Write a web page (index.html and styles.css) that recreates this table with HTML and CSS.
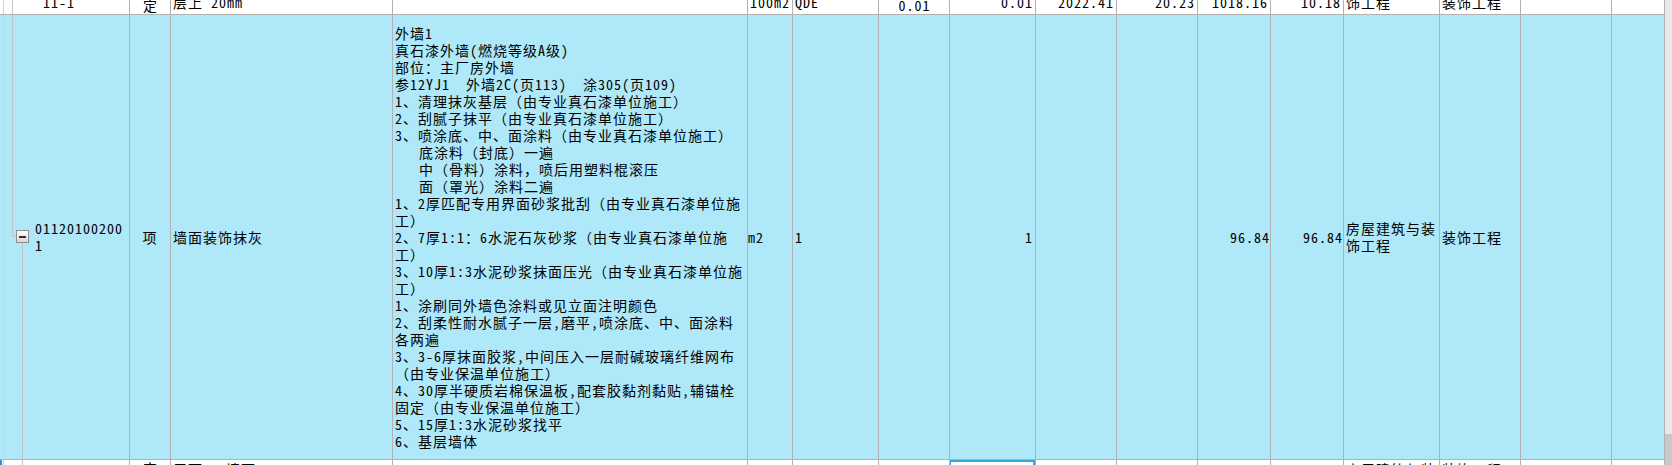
FILE: index.html
```html
<!DOCTYPE html>
<html lang="zh-CN">
<head>
<meta charset="utf-8">
<title>清单</title>
<link rel="stylesheet" href="styles.css">
</head>
<body>
<div class="page">
  <div class="grid">
    <div class="row row-top">
      <div class="cell gutter"></div>
      <div class="cell c-code"><span class="tree-line parent"></span><span class="top-code">11-1</span></div>
      <div class="cell center">定</div>
      <div class="cell">层上 20mm</div>
      <div class="cell"></div>
      <div class="cell">100m2</div>
      <div class="cell">QDE</div>
      <div class="cell center">0.01</div>
      <div class="cell right">0.01</div>
      <div class="cell right">2022.41</div>
      <div class="cell right">20.23</div>
      <div class="cell right">1018.16</div>
      <div class="cell right">10.18</div>
      <div class="cell">饰工程</div>
      <div class="cell">装饰工程</div>
      <div class="cell"></div>
      <div class="cell"></div>
    </div>

    <div class="row row-main">
      <div class="cell gutter"></div>
      <div class="cell c-code">
        <span class="tree-line parent-end"></span>
        <span class="tree-elbow"></span>
        <span class="tree-box"><span class="minus"></span></span>
        <span class="tree-line child"></span>
        <span class="code-text">01120100200<br>1</span>
      </div>
      <div class="cell center">项</div>
      <div class="cell">墙面装饰抹灰</div>
      <div class="cell desc">外墙1<br>真石漆外墙(燃烧等级A级)<br>部位：主厂房外墙<br>参12YJ1&nbsp;&nbsp;外墙2C(页113)&nbsp;&nbsp;涂305(页109)<br>1、清理抹灰基层（由专业真石漆单位施工）<br>2、刮腻子抹平（由专业真石漆单位施工）<br>3、喷涂底、中、面涂料（由专业真石漆单位施工）<br>&nbsp;&nbsp;&nbsp;底涂料（封底）一遍<br>&nbsp;&nbsp;&nbsp;中（骨料）涂料，喷后用塑料棍滚压<br>&nbsp;&nbsp;&nbsp;面（罩光）涂料二遍<br>1、2厚匹配专用界面砂浆批刮（由专业真石漆单位施<br>工）<br>2、7厚1:1：6水泥石灰砂浆（由专业真石漆单位施<br>工）<br>3、10厚1:3水泥砂浆抹面压光（由专业真石漆单位施<br>工）<br>1、涂刷同外墙色涂料或见立面注明颜色<br>2、刮柔性耐水腻子一层,磨平,喷涂底、中、面涂料<br>各两遍<br>3、3-6厚抹面胶浆,中间压入一层耐碱玻璃纤维网布<br>（由专业保温单位施工）<br>4、30厚半硬质岩棉保温板,配套胶黏剂黏贴,辅锚栓<br>固定（由专业保温单位施工）<br>5、15厚1:3水泥砂浆找平<br>6、基层墙体</div>
      <div class="cell tight">m2</div>
      <div class="cell">1</div>
      <div class="cell"></div>
      <div class="cell right">1</div>
      <div class="cell"></div>
      <div class="cell"></div>
      <div class="cell right flush">96.84</div>
      <div class="cell right flush">96.84</div>
      <div class="cell">房屋建筑与装饰工程</div>
      <div class="cell">装饰工程</div>
      <div class="cell"></div>
      <div class="cell"></div>
    </div>

    <div class="row row-bottom">
      <div class="cell gutter marked"></div>
      <div class="cell c-code"><span class="tree-line child-cont"></span></div>
      <div class="cell center">定</div>
      <div class="cell">屋面1：墙面</div>
      <div class="cell"></div>
      <div class="cell"></div>
      <div class="cell"></div>
      <div class="cell"></div>
      <div class="cell selected"></div>
      <div class="cell"></div>
      <div class="cell"></div>
      <div class="cell"></div>
      <div class="cell"></div>
      <div class="cell wrap">房屋建筑与装饰工程</div>
      <div class="cell">装饰工程</div>
      <div class="cell"></div>
      <div class="cell"></div>
    </div>
  </div>
  <div class="scrollbar"><div class="thumb"></div></div>
</div>
</body>
</html>
```

FILE: styles.css
```css
html, body {
  margin: 0;
  padding: 0;
  background: #ffffff;
}

.page {
  width: 1672px;
  height: 465px;
  overflow: hidden;
  display: flex;
  font-family: "Noto Sans Mono CJK SC", "Noto Sans CJK SC", sans-serif;
  font-size: 14px;
  letter-spacing: 1px;
  line-height: 17px;
  color: #000;
}

.grid {
  width: 1665px;
  height: 465px;
  display: flex;
  flex-direction: column;
}

.row {
  display: grid;
  grid-template-columns: 4px 126px 41px 222px 355px 45px 86px 71px 86px 81px 81px 73px 73px 96px 81px 91px 53px;
  flex-shrink: 0;
}

.row-top {
  height: 15px;
  background: #ffffff;
}

.row-main {
  height: 445px;
  background: #aee8f9;
}

.row-bottom {
  flex: 1 1 0;
  min-height: 0;
  background: #ffffff;
}

.cell {
  box-sizing: border-box;
  border-right: 1px solid #b2b2b2;
  border-bottom: 1px solid #b2b2b2;
  padding: 0 2px;
  display: flex;
  align-items: center;
  overflow: hidden;
  white-space: normal;
  word-break: break-all;
  position: relative;
}

.row-top .cell {
  align-items: flex-end;
  padding-bottom: 3px;
  white-space: nowrap;
}

.row-bottom .cell {
  align-items: flex-start;
  padding-top: 1px;
  border-bottom: none;
  white-space: nowrap;
}

.row-bottom .cell.wrap {
  white-space: normal;
}

.cell.gutter {
  padding: 0;
  border-right-color: #d0d0d0;
}

.cell.gutter.marked {
  border-left: 2px solid #2b8fd0;
}

.cell.center {
  justify-content: center;
  padding: 0;
}

.row-bottom .cell.center,
.row-top .cell.center {
  padding-left: 1px;
}

.cell.right {
  justify-content: flex-end;
  padding-right: 2px;
}

.cell.right.flush {
  padding-right: 0;
}

.cell.tight {
  padding-left: 0;
}

.cell.desc {
  white-space: nowrap;
  padding-left: 2px;
}

.cell.selected::after {
  content: "";
  position: absolute;
  left: -1px;
  right: 0;
  top: 0;
  height: 10px;
  border: 2px solid #3aa5d8;
  border-bottom: none;
}

.c-code {
  padding-left: 31px;
}

.top-code {
  padding-left: 8px;
}

.code-text {
  display: block;
}

.tree-line {
  position: absolute;
  width: 1px;
  background: #c4c4c4;
}

.tree-line.parent {
  left: 8px;
  top: 0;
  bottom: 0;
}

.tree-line.parent-end {
  left: 8px;
  top: 0;
  height: calc(50% - 1px);
}

.tree-elbow {
  position: absolute;
  left: 8px;
  width: 4px;
  height: 1px;
  top: calc(50% - 1px);
  background: #c4c4c4;
}

.tree-box {
  position: absolute;
  left: 12px;
  top: calc(50% - 7px);
  width: 11px;
  height: 11px;
  border: 1px solid #8e8e8e;
  background: linear-gradient(#ffffff, #d6d6d6);
  display: flex;
  align-items: center;
  justify-content: center;
}

.minus {
  width: 7px;
  height: 2px;
  background: #333333;
}

.tree-line.child {
  left: 18px;
  top: calc(50% + 6px);
  bottom: 0;
}

.tree-line.child-cont {
  left: 18px;
  top: 0;
  bottom: 0;
}

.scrollbar {
  width: 7px;
  height: 465px;
  background: #e8e8e8;
  display: flex;
  flex-direction: column;
  justify-content: flex-end;
}

.thumb {
  height: 31px;
  background: #c8c8c8;
}
```
